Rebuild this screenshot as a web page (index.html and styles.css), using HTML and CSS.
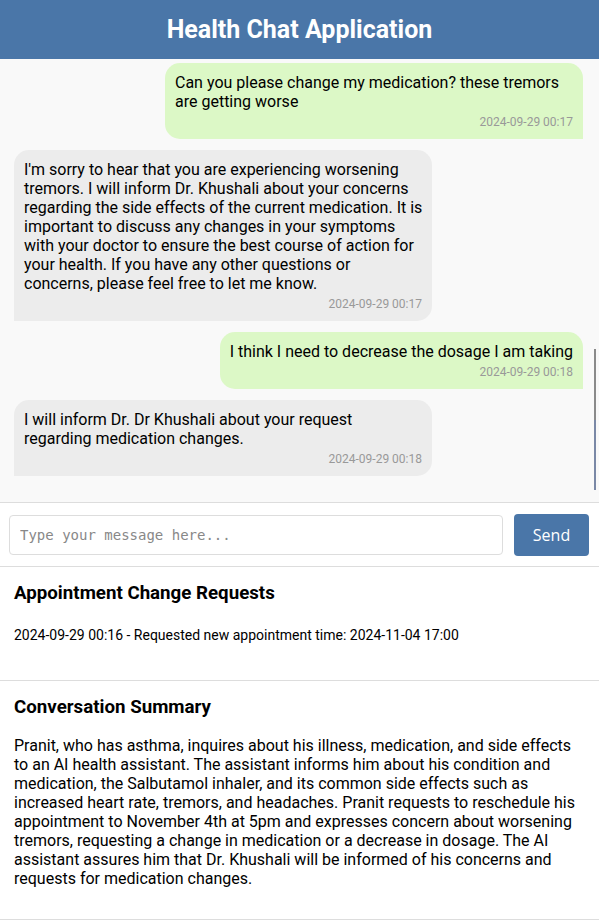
FILE: index.html
```html
<!DOCTYPE html>
<html>
<head>
<meta charset="utf-8">
<link rel="stylesheet" href="styles.css">
</head>
<body>
<header class="app-header"><h1>Health Chat Application</h1></header>
<section class="chat">
  <div class="msg user">
    <div class="msg-text">Can you please change my medication? these tremors are getting worse</div>
    <div class="msg-time">2024-09-29 00:17</div>
  </div>
  <div class="msg bot">
    <div class="msg-text">I'm sorry to hear that you are experiencing worsening tremors. I will inform Dr. Khushali about your concerns regarding the side effects of the current medication. It is important to discuss any changes in your symptoms with your doctor to ensure the best course of action for your health. If you have any other questions or concerns, please feel free to let me know.</div>
    <div class="msg-time">2024-09-29 00:17</div>
  </div>
  <div class="msg user">
    <div class="msg-text">I think I need to decrease the dosage I am taking</div>
    <div class="msg-time">2024-09-29 00:18</div>
  </div>
  <div class="msg bot">
    <div class="msg-text">I will inform Dr. Dr Khushali about your request regarding medication changes.</div>
    <div class="msg-time">2024-09-29 00:18</div>
  </div>
  <div class="scroll-thumb"></div>
</section>
<form class="composer">
  <input class="composer-input" type="text" placeholder="Type your message here...">
  <button class="composer-send" type="button">Send</button>
</form>
<section class="panel">
  <h2 class="panel-title">Appointment Change Requests</h2>
  <p class="panel-item">2024-09-29 00:16 - Requested new appointment time: 2024-11-04 17:00</p>
</section>
<section class="panel summary">
  <h2 class="panel-title">Conversation Summary</h2>
  <p class="summary-text">Pranit, who has asthma, inquires about his illness, medication, and side effects to an AI health assistant. The assistant informs him about his condition and medication, the Salbutamol inhaler, and its common side effects such as increased heart rate, tremors, and headaches. Pranit requests to reschedule his appointment to November 4th at 5pm and expresses concern about worsening tremors, requesting a change in medication or a decrease in dosage. The AI assistant assures him that Dr. Khushali will be informed of his concerns and requests for medication changes.</p>
</section>
</body>
</html>
```
FILE: styles.css
```css
* { box-sizing: border-box; }
html, body { margin: 0; padding: 0; }
body {
  font-family: Roboto, "Liberation Sans", Arial, sans-serif;
  color: #000;
  background: #fff;
  width: 599px;
}
.app-header {
  height: 59px;
  background: #4a76a8;
  display: flex;
  align-items: center;
  justify-content: center;
}
.app-header h1 {
  margin: 0;
  color: #fff;
  font-size: 25px;
  font-weight: 700;
}
.chat {
  position: relative;
  height: 444px;
  background: #f9f9f9;
  border-bottom: 1px solid #ddd;
  overflow: hidden;
  padding: 4px 16px 0 14px;
  display: flex;
  flex-direction: column;
  gap: 11px;
}
.msg {
  width: fit-content;
  max-width: 418px;
  padding: 10px 10px 10px 10px;
  font-size: 16px;
  line-height: 19px;
}
.msg.user {
  align-self: flex-end;
  background: #dcf8c6;
  border-radius: 15px 15px 0 15px;
}
.msg.bot {
  align-self: flex-start;
  background: #ececec;
  border-radius: 15px 15px 15px 0;
  width: 418px;
  padding-right: 9px;
}
.msg.bot .msg-time { padding-right: 1px; }
.msg-time {
  margin-top: 4px;
  text-align: right;
  font-size: 12px;
  line-height: 14px;
  color: #999;
}
.scroll-thumb {
  position: absolute;
  left: 594px;
  top: 290px;
  width: 2px;
  height: 141px;
  background: linear-gradient(#8a8a8a 0 50%, #7a88a6 50% 100%);
}
.composer {
  margin: 0;
  height: 64px;
  border-bottom: 1px solid #ddd;
  display: flex;
  align-items: center;
  gap: 11px;
  padding: 0 10px 0 9px;
}
.composer-input {
  flex: 1;
  height: 40px;
  border: 1px solid #ddd;
  border-radius: 4px;
  padding: 0 10px;
  font-family: "DejaVu Sans Mono", monospace;
  font-size: 14px;
  background: #fff;
}
.composer-input::placeholder { color: #888; }
.composer-send {
  width: 75px;
  height: 42px;
  border: none;
  border-radius: 4px;
  background: #4a76a8;
  color: #fff;
  font-family: "Open Sans", sans-serif;
  font-size: 16px;
}
.panel {
  padding: 15px 14px 0 14px;
  height: 114px;
  border-bottom: 1px solid #ddd;
}
.panel-title {
  margin: 0;
  font-size: 18.72px;
  line-height: 22px;
  font-weight: 700;
}
.panel-item {
  margin: 23px 0 0 0;
  font-size: 14px;
  line-height: 17px;
}
.summary { height: 239px; }
.summary-text {
  margin: 18px 0 0 0;
  font-size: 16px;
  line-height: 19px;
}
```
